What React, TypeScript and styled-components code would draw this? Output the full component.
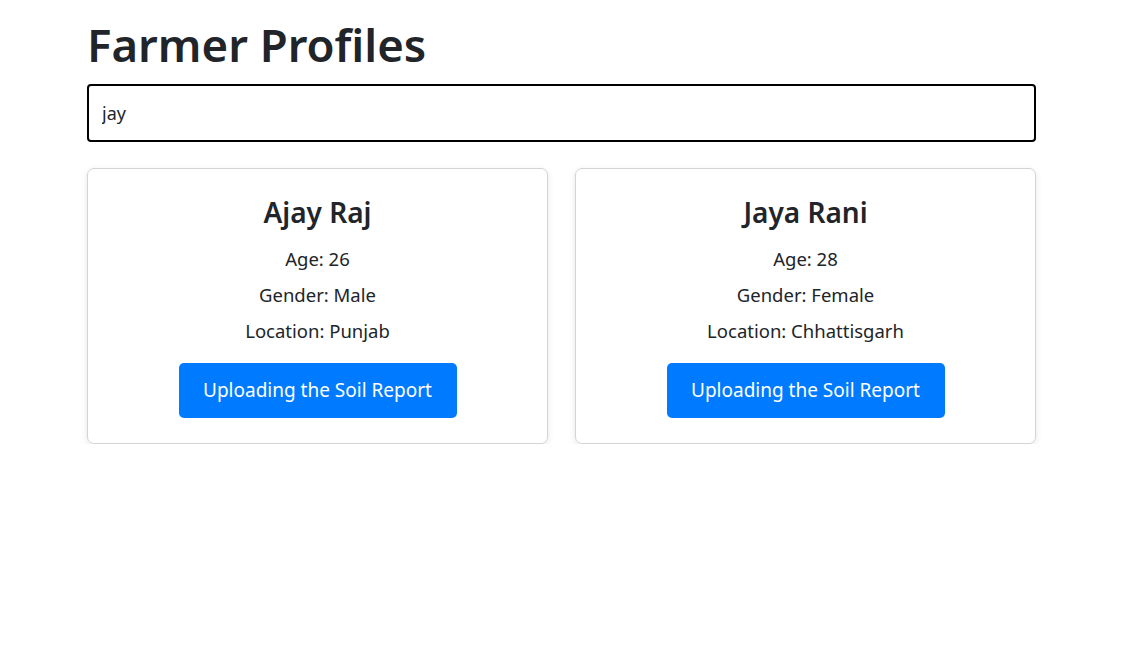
import { useState } from "react";
import styled, { createGlobalStyle } from "styled-components";

const GlobalStyle = createGlobalStyle`
  body {
    margin: 0;
    background: #fff;
    color: #212529;
    font-family: "Noto Sans", "Open Sans", sans-serif;
  }
`;

const Page = styled.div`
  max-width: 949px;
  margin: 0 auto;
  padding-top: 17px;
`;

const Title = styled.h1`
  margin: 0 0 11px;
  font-size: 45.5px;
  font-weight: 600;
  line-height: 1.23;
  color: #212529;
`;

const Search = styled.input`
  box-sizing: border-box;
  width: 100%;
  height: 58px;
  padding: 0 13px;
  border: 2px solid #000;
  border-radius: 4px;
  font-family: inherit;
  font-size: 18px;
  color: #212529;
  outline: none;
`;

const Grid = styled.div`
  display: grid;
  grid-template-columns: 1fr 1fr;
  gap: 27px;
  margin-top: 26px;
`;

const Card = styled.div`
  display: flex;
  flex-direction: column;
  align-items: center;
  padding: 26px 20px 25px;
  border: 1px solid #d4d4d4;
  border-radius: 7px;
  box-shadow: 0 2px 6px rgba(0, 0, 0, 0.1);
`;

const Name = styled.h2`
  margin: 0 0 16px;
  font-size: 28px;
  font-weight: 600;
  line-height: 34px;
`;

const Info = styled.p`
  margin: 0 0 9px;
  font-size: 18.5px;
  line-height: 27px;
`;

const UploadButton = styled.button`
  margin-top: 10px;
  width: 278px;
  height: 55px;
  border: none;
  border-radius: 5px;
  background: #007bff;
  color: #fff;
  font-family: inherit;
  font-size: 19px;
  cursor: pointer;
`;

type Farmer = { name: string; age: number; gender: string; location: string };

const farmers: Farmer[] = [
  { name: "Ajay Raj", age: 26, gender: "Male", location: "Punjab" },
  { name: "Jaya Rani", age: 28, gender: "Female", location: "Chhattisgarh" },
];

export default function App() {
  const [query, setQuery] = useState("jay");
  const shown = farmers.filter((f) =>
    f.name.toLowerCase().includes(query.toLowerCase())
  );
  return (
    <>
      <GlobalStyle />
      <Page>
        <Title>Farmer Profiles</Title>
        <Search value={query} onChange={(e) => setQuery(e.target.value)} />
        <Grid>
          {shown.map((f) => (
            <Card key={f.name}>
              <Name>{f.name}</Name>
              <Info>Age: {f.age}</Info>
              <Info>Gender: {f.gender}</Info>
              <Info>Location: {f.location}</Info>
              <UploadButton>Uploading the Soil Report</UploadButton>
            </Card>
          ))}
        </Grid>
      </Page>
    </>
  );
}
